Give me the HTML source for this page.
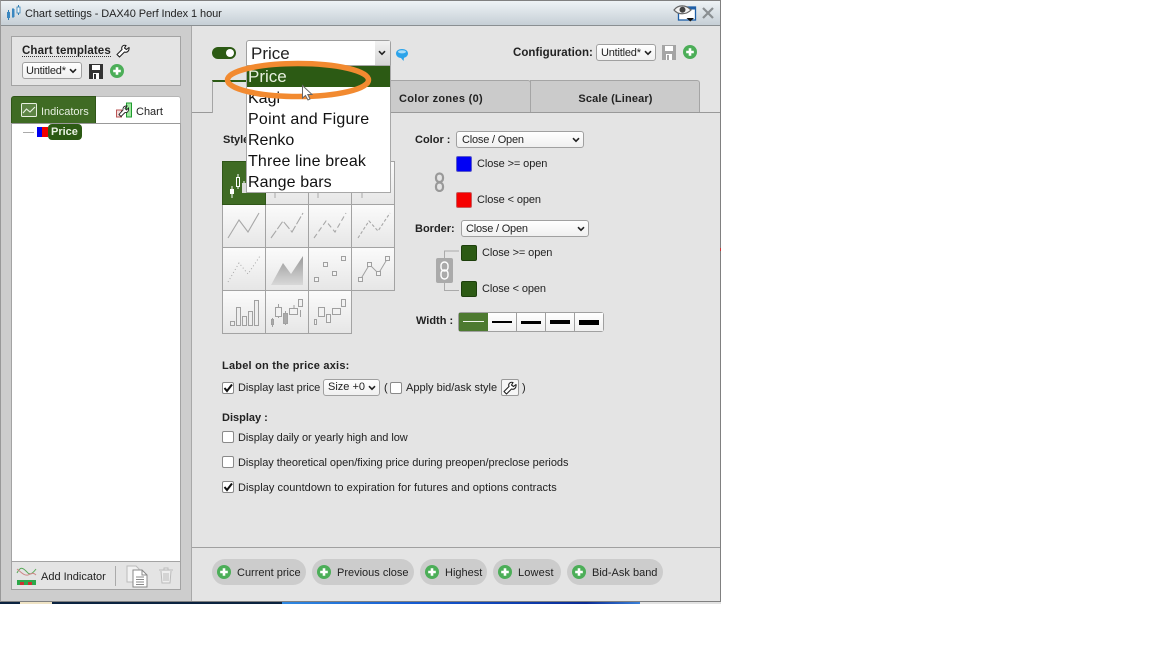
<!DOCTYPE html>
<html><head><meta charset="utf-8"><title>Chart settings</title>
<style>
html,body{margin:0;padding:0;background:#fff;width:1152px;height:648px;overflow:hidden}
*{box-sizing:border-box}
body{font-family:"Liberation Sans",sans-serif;font-size:11px;color:#222;position:relative}
.a{position:absolute}
.t{position:absolute;white-space:nowrap;line-height:14px;margin-top:1px}
.b{font-weight:bold}
.sel{position:absolute;background:linear-gradient(#fff,#f0f0f0);border:1px solid #a0a0a0;border-radius:3px;white-space:nowrap;padding-left:4px;color:#222;line-height:17px!important}
.chev{position:absolute;top:50%;margin-top:-3px}
.cb{position:absolute;width:12px;height:12px;background:#fff;border:1px solid #8a8a8a;border-radius:2px}
.sw{position:absolute;width:16px;height:16px;border-radius:2px}
.pill{position:absolute;top:559px;height:26px;background:#ccc;border-radius:13px}
.pill span{position:absolute;left:25px;top:7px;white-space:nowrap;line-height:14px}
.plus{position:absolute;left:5px;top:6px}
.opt{position:absolute;left:2px;font-size:16px;line-height:21px;white-space:nowrap;color:#111}
.w{position:absolute;top:313px;height:18px;width:29px;background:linear-gradient(#fff,#f0f0f0);border-right:1px solid #a0a0a0}
.w i{position:absolute;left:4px;right:4px;background:#000;display:block}
</style></head><body>

<svg width="0" height="0" style="position:absolute"><defs>
<symbol id="plus" viewBox="0 0 14 14"><circle cx="7" cy="7" r="7" fill="#4cae58"/><path d="M7 3.200v7.600M3.200 7h7.600" stroke="#fff" stroke-width="2.600"/></symbol>
<symbol id="chev" viewBox="0 0 8 6"><path d="M1 1.200L4 4.200L7 1.200" fill="none" stroke="#222" stroke-width="1.600"/></symbol>
<symbol id="disk" viewBox="0 0 14 15"><path d="M0 0H14V15H0Z" fill="currentColor"/><rect x="3" y="1" width="8" height="5" fill="#fff"/><rect x="4" y="9" width="6" height="6" fill="#fff"/><rect x="5" y="10" width="2" height="5" fill="currentColor"/></symbol>
<symbol id="wrench" viewBox="0 0 14 14"><path d="M1 10.500L3.500 13L8.500 8C11 9 13.500 7 13 3.500L10.500 5.500L8.500 4L10 1.500C7 .5 5 3 6 5.500Z" fill="#fff" stroke="#222" stroke-width="1.100" stroke-linejoin="round"/></symbol>
</defs></svg>

<!-- desktop strip -->
<div class="a" style="left:0;top:600px;width:282px;height:4px;background:#0b2340"></div>
<div class="a" style="left:20px;top:601px;width:32px;height:3px;background:#efe3c4"></div>
<div class="a" style="left:282px;top:601px;width:358px;height:3px;background:linear-gradient(90deg,#2f88e0,#1458d0 40%,#0a2c96 85%,#3a80d8)"></div>
<div class="a" style="left:640px;top:601px;width:81px;height:3px;background:#e2e2e2"></div>

<!-- window -->
<div class="a" style="left:0;top:0;width:721px;height:602px;background:#e4e4e4;border:1px solid #808080;border-left:1px solid #999;overflow:hidden"></div>
<!-- title -->
<div class="a" style="left:1px;top:1px;width:719px;height:25px;background:linear-gradient(#eef3f6,#c6cfd6);border-bottom:1px solid #8a8f92"></div>
<svg class="a" style="left:6px;top:5px" width="16" height="16"><path d="M2.500 5V15M7 3V13M12.500 0V10" stroke="#2f7fb5" stroke-width="1"/><rect x="1" y="7" width="3" height="6" fill="#3a87c0"/><rect x="6" y="4" width="2.500" height="8" fill="#3a87c0"/><rect x="11" y="2" width="3" height="6" fill="#eef5fa" stroke="#2f7fb5" stroke-width=".8"/></svg>
<div class="t" style="left:25px;top:6px;font-size:11px;color:#222;letter-spacing:-.08px">Chart settings - DAX40 Perf Index 1 hour</div>
<svg class="a" style="left:673px;top:4px" width="24" height="18"><rect x="5.500" y="3" width="17" height="13" fill="#fff" stroke="#1d5fa8" stroke-width="1.300"/><rect x="14" y="2.500" width="9" height="3" fill="#1d5fa8"/><path d="M1 6C5 .5 13 .5 18 6C13 11 5 11 1 6Z" fill="#f2f2f2" stroke="#666" stroke-width="1.200"/><circle cx="9.500" cy="5.800" r="3" fill="#444"/><path d="M13.500 14H21L17.300 17.500Z" fill="#111"/></svg>
<svg class="a" style="left:702px;top:7px" width="12" height="12"><path d="M1 1L11 11M11 1L1 11" stroke="#8a8f92" stroke-width="2.200"/></svg>

<!-- sidebar -->
<div class="a" style="left:1px;top:26px;width:191px;height:575px;background:#cdcdcd;border-right:1px solid #a8a8a8"></div>
<div class="a" style="left:11px;top:36px;width:170px;height:50px;background:#e4e4e4;border:1px solid #a3a3a3"></div>
<div class="t b" style="left:22px;top:45px;font-size:11.500px;border-bottom:1px dotted #333;line-height:10px;letter-spacing:.13px">Chart templates</div>
<svg class="a" style="left:116px;top:44px" width="14" height="14"><use href="#wrench"/></svg>
<div class="sel" style="left:22px;top:62px;width:60px;height:17px;line-height:15px;padding-left:3px;font-size:11px;letter-spacing:-.2px">Untitled*<svg class="chev" style="right:4px" width="8" height="6"><use href="#chev"/></svg></div>
<svg class="a" style="left:89px;top:64px;color:#333" width="14" height="15"><use href="#disk"/></svg>
<svg class="a" style="left:110px;top:64px" width="14" height="14"><use href="#plus"/></svg>

<div class="a" style="left:11px;top:96px;width:85px;height:28px;background:#3f6b24;border:1px solid #2f5518;border-radius:3px 0 0 0"></div>
<div class="a" style="left:96px;top:96px;width:85px;height:28px;background:#fff;border:1px solid #b5b5b5;border-left:0;border-radius:0 3px 0 0"></div>
<svg class="a" style="left:21px;top:103px" width="16" height="14"><rect x=".5" y=".5" width="15" height="13" rx="1" fill="#5d8445" stroke="#e8f0e2"/><path d="M2 10L5.500 6L9 9L14 4" fill="none" stroke="#e8f0e2" stroke-width="1.100"/></svg>
<div class="t" style="left:41px;top:104px;color:#e6efe0">Indicators</div>
<svg class="a" style="left:116px;top:102px" width="17" height="16"><rect x=".5" y="8" width="5" height="7" fill="#f3dcdc" stroke="#b55"/><rect x="10.500" y="1" width="5" height="14" fill="#9fe89f" stroke="#1f9a2f"/><path d="M3 12.500L5 14.500L9 10.500C11 11 13 9.500 12.500 6L10.500 8L9 6.500L11 4C8.500 3.500 6.500 5.500 7 8Z" fill="#fff" stroke="#222" stroke-width=".9"/></svg>
<div class="t" style="left:136px;top:104px">Chart</div>

<div class="a" style="left:11px;top:123px;width:170px;height:467px;border:1px solid #a3a3a3;background:#fff"></div>
<div class="a" style="left:12px;top:123px;width:168px;height:1px;background:#999"></div>
<div class="a" style="left:23px;top:132px;width:11px;height:1px;background:#aaa"></div>
<div class="a" style="left:37px;top:127px;width:5px;height:10px;background:#0000f0"></div>
<div class="a" style="left:42px;top:127px;width:6px;height:10px;background:#f00000"></div>
<div class="a" style="left:48px;top:124px;width:34px;height:16px;background:#2c5a14;border-radius:4px;color:#eaf2e4;font-size:11px;font-weight:bold;line-height:17px;padding-left:3px">Price</div>

<div class="a" style="left:12px;top:561px;width:168px;height:28px;background:#e4e4e4;border-top:1px solid #a3a3a3"></div>
<svg class="a" style="left:16px;top:565px" width="21" height="21"><path d="M1 8C5 0 8 4 11 7C14 11 17 8 20 4" fill="none" stroke="#58a858" stroke-width="1"/><path d="M1 4C5 7 8 11 12 10C15 9 17 7 20 10" fill="none" stroke="#c88" stroke-width="1"/><rect x="1" y="15" width="19" height="5" fill="#2da84a"/><rect x="4" y="17" width="4" height="3" fill="#c33"/><rect x="12" y="17" width="4" height="3" fill="#c33"/></svg>
<div class="t" style="left:41px;top:569px">Add Indicator</div>
<div class="a" style="left:115px;top:566px;width:1px;height:20px;background:#aaa"></div>
<svg class="a" style="left:126px;top:565px" width="23" height="23"><path d="M1 1H10L13 4V17H1Z" fill="#f2f2f2" stroke="#bbb"/><path d="M7 5H16L21 10V22H7Z" fill="#fff" stroke="#888"/><path d="M16 5V10H21M10 12H18M10 14.500H18M10 17H18M10 19.500H18" fill="none" stroke="#888"/></svg>
<svg class="a" style="left:158px;top:566px" width="16" height="19"><path d="M1 4H15M3 5L4 17H12L13 5M6 2H10V4H6ZM6 7V15M8 7V15M10 7V15" fill="#eee" stroke="#bbb"/></svg>

<!-- top controls -->
<div class="a" style="left:212px;top:47px;width:24px;height:12px;background:#2c5a14;border-radius:6px"></div>
<div class="a" style="left:226px;top:49px;width:8px;height:8px;background:#fff;border-radius:50%"></div>

<div class="t b" style="left:513px;top:45px;font-size:11.500px;letter-spacing:.05px">Configuration:</div>
<div class="sel" style="left:596px;top:44px;width:60px;height:17px;line-height:15px;padding-left:4px;font-size:11px;letter-spacing:-.2px">Untitled*<svg class="chev" style="right:3px" width="8" height="6"><use href="#chev"/></svg></div>
<svg class="a" style="left:662px;top:45px;color:#a5a5a5" width="14" height="15"><use href="#disk"/></svg>
<svg class="a" style="left:683px;top:45px" width="14" height="14"><use href="#plus"/></svg>

<!-- tabs -->
<div class="a" style="left:192px;top:112px;width:528px;height:1px;background:#999"></div>
<div class="a" style="left:212px;top:80px;width:158px;height:33px;background:#e4e4e4;border:1px solid #a5a5a5;border-bottom:0;border-top:2px solid #2c5a14"></div>
<div class="a" style="left:370px;top:80px;width:161px;height:32px;background:#cbcbcb;border:1px solid #a5a5a5;border-bottom:0;border-radius:3px 3px 0 0"></div>
<div class="a" style="left:530px;top:80px;width:170px;height:32px;background:#cbcbcb;border:1px solid #a5a5a5;border-bottom:0;border-radius:0 3px 0 0"></div>
<div class="t b" style="left:370px;top:91px;width:142px;text-align:center;letter-spacing:.3px">Color zones (0)</div>
<div class="t b" style="left:531px;top:91px;width:169px;text-align:center;letter-spacing:.15px">Scale (Linear)</div>

<!-- style grid -->
<div class="t b" style="left:223px;top:132px">Style</div>
<svg class="a" style="left:222px;top:161px" width="174" height="174" fill="none">
<defs><linearGradient id="g" x1="0" y1="0" x2="0" y2="1"><stop offset="0" stop-color="#fbfbfb"/><stop offset="1" stop-color="#e6e6e6"/></linearGradient>
<linearGradient id="ga" x1="0" y1="0" x2="0" y2="1"><stop offset="0" stop-color="#999"/><stop offset="1" stop-color="#d8d8d8"/></linearGradient></defs>
<g stroke="#a3a3a3" fill="url(#g)">
<rect x="43.500" y=".5" width="43" height="43"/><rect x="86.500" y=".5" width="43" height="43"/><rect x="129.500" y=".5" width="43" height="43"/>
<rect x=".5" y="43.500" width="43" height="43"/><rect x="43.500" y="43.500" width="43" height="43"/><rect x="86.500" y="43.500" width="43" height="43"/><rect x="129.500" y="43.500" width="43" height="43"/>
<rect x=".5" y="86.500" width="43" height="43"/><rect x="43.500" y="86.500" width="43" height="43"/><rect x="86.500" y="86.500" width="43" height="43"/><rect x="129.500" y="86.500" width="43" height="43"/>
<rect x=".5" y="129.500" width="43" height="43"/><rect x="43.500" y="129.500" width="43" height="43"/><rect x="86.500" y="129.500" width="43" height="43"/>
</g>
<rect x=".5" y=".5" width="43" height="43" fill="#3f6b24" stroke="#2f5518"/>
<path d="M10 25V37M16 13V28M22 20V32" stroke="#fff"/>
<rect x="8" y="28" width="4" height="5" fill="#fff"/><rect x="14.500" y="16.500" width="3" height="9" fill="#3f6b24" stroke="#fff"/><rect x="20" y="22" width="4" height="10" fill="#ddd"/>
<path d="M53 32V37M56 31H60M96 32V37M140 32V37" stroke="#aaa"/>
<path d="M6 77L17 59L26 71L37 52" stroke="#a8a8a8" stroke-width="1.100"/>
<path d="M49 77L61 60L70 71L81 52" stroke="#a8a8a8" stroke-width="1.100" stroke-dasharray="9 2"/>
<path d="M92 77L104 60L113 71L124 52" stroke="#a8a8a8" stroke-width="1.100" stroke-dasharray="5 3"/>
<path d="M136 77L147 60L156 70L168 52" stroke="#a8a8a8" stroke-width="1.100" stroke-dasharray="3 2"/>
<path d="M6 121L17 102L26 113L38 95" stroke="#a8a8a8" stroke-dasharray="1 2.500"/>
<path d="M49 124L61 102L69 113L81 95V124Z" fill="url(#ga)"/>
<g stroke="#a0a0a0" fill="#f4f4f4"><rect x="92.500" y="116.500" width="4" height="4"/><rect x="101.500" y="101.500" width="4" height="4"/><rect x="110.500" y="110.500" width="4" height="4"/><rect x="119.500" y="95.500" width="4" height="4"/></g>
<path d="M138.500 118.500L147.500 103.500L156.500 112.500L165.500 97.500" stroke="#a0a0a0"/>
<g stroke="#a0a0a0" fill="#f4f4f4"><rect x="136.500" y="116.500" width="4" height="4"/><rect x="145.500" y="101.500" width="4" height="4"/><rect x="154.500" y="110.500" width="4" height="4"/><rect x="163.500" y="95.500" width="4" height="4"/></g>
<g stroke="#a0a0a0" fill="#eee"><rect x="8.500" y="160.500" width="4" height="4"/><rect x="14.500" y="146.500" width="4" height="18"/><rect x="20.500" y="155.500" width="4" height="9"/><rect x="26.500" y="150.500" width="4" height="14"/><rect x="32.500" y="139.500" width="4" height="25"/></g>
<path d="M50.500 157V166M56.500 143V157M63.500 150V164M72 144V147M78.500 149V156" stroke="#a0a0a0"/>
<g stroke="#a0a0a0" fill="#f2f2f2"><rect x="49.500" y="158.500" width="2" height="5" fill="#aaa"/><rect x="53.500" y="146.500" width="6" height="9"/><rect x="61.500" y="152.500" width="4" height="10" fill="#aaa"/><rect x="67.500" y="147.500" width="8" height="6"/><rect x="76.500" y="138.500" width="4" height="7"/></g>
<g stroke="#a0a0a0" fill="#f2f2f2"><rect x="92.500" y="158.500" width="2" height="5"/><rect x="96.500" y="146.500" width="6" height="9"/><rect x="104.500" y="153.500" width="4" height="8"/><rect x="110.500" y="147.500" width="8" height="6"/><rect x="119.500" y="138.500" width="4" height="7"/></g>
</svg>

<!-- color / border -->
<div class="t b" style="left:415px;top:132px">Color :</div>
<div class="sel" style="left:456px;top:131px;width:128px;height:17px;line-height:15px;padding-left:5px;font-size:11px;letter-spacing:-.2px">Close / Open<svg class="chev" style="right:3px" width="8" height="6"><use href="#chev"/></svg></div>
<div class="sw" style="left:456px;top:156px;background:#0000f5;border:1px solid #5a5ac8"></div>
<div class="t" style="left:477px;top:156px;letter-spacing:-.1px">Close &gt;= open</div>
<div class="sw" style="left:456px;top:192px;background:#f50000;border:1px solid #c85a5a"></div>
<div class="t" style="left:477px;top:192px;letter-spacing:-.1px">Close &lt; open</div>
<svg class="a" style="left:434px;top:172px" width="11" height="20" fill="none"><rect x="2" y="1.500" width="7" height="8.500" rx="3.500" stroke="#999" stroke-width="2.200"/><rect x="2" y="10.500" width="7" height="8.500" rx="3.500" stroke="#999" stroke-width="2.200"/></svg>

<div class="t b" style="left:415px;top:221px">Border:</div>
<div class="sel" style="left:461px;top:220px;width:128px;height:17px;line-height:15px;padding-left:4px;font-size:11px;letter-spacing:-.2px">Close / Open<svg class="chev" style="right:3px" width="8" height="6"><use href="#chev"/></svg></div>
<div class="sw" style="left:461px;top:245px;background:#2c5a14;border:1px solid #1d3f0c"></div>
<div class="t" style="left:482px;top:245px;letter-spacing:-.1px">Close &gt;= open</div>
<div class="sw" style="left:461px;top:281px;background:#2c5a14;border:1px solid #1d3f0c"></div>
<div class="t" style="left:482px;top:281px;letter-spacing:-.1px">Close &lt; open</div>
<svg class="a" style="left:435px;top:250px" width="24" height="47" fill="none"><path d="M9.500 8V1H24M9.500 33V40.500H24" stroke="#aaa"/><rect x="1" y="8" width="17" height="25" rx="2" fill="#aaa"/><rect x="6" y="12" width="7" height="9" rx="3.500" stroke="#fff" stroke-width="1.400"/><rect x="6" y="20" width="7" height="9" rx="3.500" stroke="#fff" stroke-width="1.400"/></svg>

<div class="t b" style="left:416px;top:313px">Width :</div>
<div class="a" style="left:458px;top:312px;width:146px;height:20px;border:1px solid #a0a0a0;border-radius:3px;overflow:hidden;background:#fff"></div>
<div class="w" style="left:459px;background:#4d7a30;border-right:0"><i style="top:8px;height:1px;background:#f0f5ec;left:4px;right:4px"></i></div>
<div class="w" style="left:488px"><i style="top:8px;height:2px"></i></div>
<div class="w" style="left:517px"><i style="top:8px;height:3px"></i></div>
<div class="w" style="left:546px"><i style="top:7px;height:4px"></i></div>
<div class="w" style="left:575px;width:28px;border-right:0"><i style="top:7px;height:5px"></i></div>

<!-- label -->
<div class="t b" style="left:222px;top:358px;letter-spacing:.22px">Label on the price axis:</div>
<div class="cb" style="left:222px;top:382px"></div>
<svg class="a" style="left:223px;top:383px" width="11" height="10"><path d="M1.500 5L4 8L9 1.500" fill="none" stroke="#111" stroke-width="2"/></svg>
<div class="t" style="left:238px;top:380px;letter-spacing:-.05px">Display last price</div>
<div class="sel" style="left:323px;top:379px;width:57px;height:17px;padding-left:4px;font-size:11px;line-height:15px!important">Size +0<svg class="chev" style="right:3px" width="8" height="6"><use href="#chev"/></svg></div>
<div class="t" style="left:384px;top:380px">(</div>
<div class="cb" style="left:390px;top:382px"></div>
<div class="t" style="left:406px;top:380px">Apply bid/ask style</div>
<div class="a" style="left:501px;top:379px;width:18px;height:17px;background:#f6f6f6;border:1px solid #999;border-radius:2px"></div>
<svg class="a" style="left:503px;top:381px" width="14" height="14"><use href="#wrench"/></svg>
<div class="t" style="left:522px;top:380px">)</div>

<div class="t b" style="left:222px;top:410px">Display :</div>
<div class="cb" style="left:222px;top:431px"></div>
<div class="t" style="left:238px;top:430px;letter-spacing:-.06px">Display daily or yearly high and low</div>
<div class="cb" style="left:222px;top:456px"></div>
<div class="t" style="left:238px;top:455px;letter-spacing:-.05px">Display theoretical open/fixing price during preopen/preclose periods</div>
<div class="cb" style="left:222px;top:481px"></div>
<svg class="a" style="left:223px;top:482px" width="11" height="10"><path d="M1.500 5L4 8L9 1.500" fill="none" stroke="#111" stroke-width="2"/></svg>
<div class="t" style="left:238px;top:480px;letter-spacing:.05px">Display countdown to expiration for futures and options contracts</div>

<!-- bottom -->
<div class="a" style="left:192px;top:547px;width:528px;height:1px;background:#a0a0a0"></div>
<div class="pill" style="left:212px;width:94px"><svg class="plus" width="14" height="14"><use href="#plus"/></svg><span>Current price</span></div>
<div class="pill" style="left:312px;width:102px"><svg class="plus" width="14" height="14"><use href="#plus"/></svg><span>Previous close</span></div>
<div class="pill" style="left:420px;width:67px"><svg class="plus" width="14" height="14"><use href="#plus"/></svg><span>Highest</span></div>
<div class="pill" style="left:493px;width:68px"><svg class="plus" width="14" height="14"><use href="#plus"/></svg><span style="letter-spacing:.15px">Lowest</span></div>
<div class="pill" style="left:567px;width:96px"><svg class="plus" width="14" height="14"><use href="#plus"/></svg><span>Bid-Ask band</span></div>

<!-- big dropdown -->
<div class="a" style="left:246px;top:40px;width:145px;height:27px;background:#fff;border:1px solid #a0a0a0;border-radius:3px 3px 0 0"></div>
<div class="t" style="left:251px;top:43px;font-size:17px;line-height:19px;color:#222">Price</div>
<div class="a" style="left:375px;top:41px;width:15px;height:25px;background:linear-gradient(#f2f2f2,#d4d4d4)"></div>
<svg class="a" style="left:378px;top:50px" width="8" height="6"><use href="#chev"/></svg>
<div class="a" style="left:246px;top:65px;width:145px;height:128px;background:#fff;border:1px solid #a8a8a8">
<div class="a" style="left:0;top:0;width:143px;height:21px;background:#2c5a14"></div>
<div class="opt" style="left:1px;top:0;color:#e8f0e0;font-size:17px">Price</div>
<div class="opt" style="left:1px;top:22px">Kagi</div>
<div class="opt" style="left:1px;top:43px;letter-spacing:.25px">Point and Figure</div>
<div class="opt" style="left:1px;top:64px">Renko</div>
<div class="opt" style="left:1px;top:85px;letter-spacing:.15px">Three line break</div>
<div class="opt" style="left:1px;top:106px;letter-spacing:.1px">Range bars</div>
</div>
<!-- speech bubble -->
<svg class="a" style="left:395px;top:48px" width="14" height="14"><path d="M1 5.500C1 2.500 4 1 7 1C10 1 13 2.500 13 5.500C13 8 10.500 9.500 9 9.800L8.500 13L6 10C3.500 10 1 8 1 5.500Z" fill="#2ba3ea"/><ellipse cx="7" cy="3.800" rx="4" ry="1.600" fill="#a8dcf8"/></svg>
<!-- orange ellipse -->
<svg class="a" style="left:220px;top:58px" width="156" height="44" fill="none"><ellipse cx="78" cy="22" rx="70.500" ry="16.500" stroke="#f28a30" stroke-width="5.500"/></svg>
<!-- cursor -->
<svg class="a" style="left:301px;top:84px" width="14" height="20"><path d="M1.500 1.500V14L4.500 11.500L7 16L9 15L6.800 10.500L11 10.500Z" fill="#fff" stroke="#666" stroke-width="1"/></svg>
<div class="a" style="left:720px;top:248px;width:1px;height:3px;background:#c33"></div>
</body></html>
